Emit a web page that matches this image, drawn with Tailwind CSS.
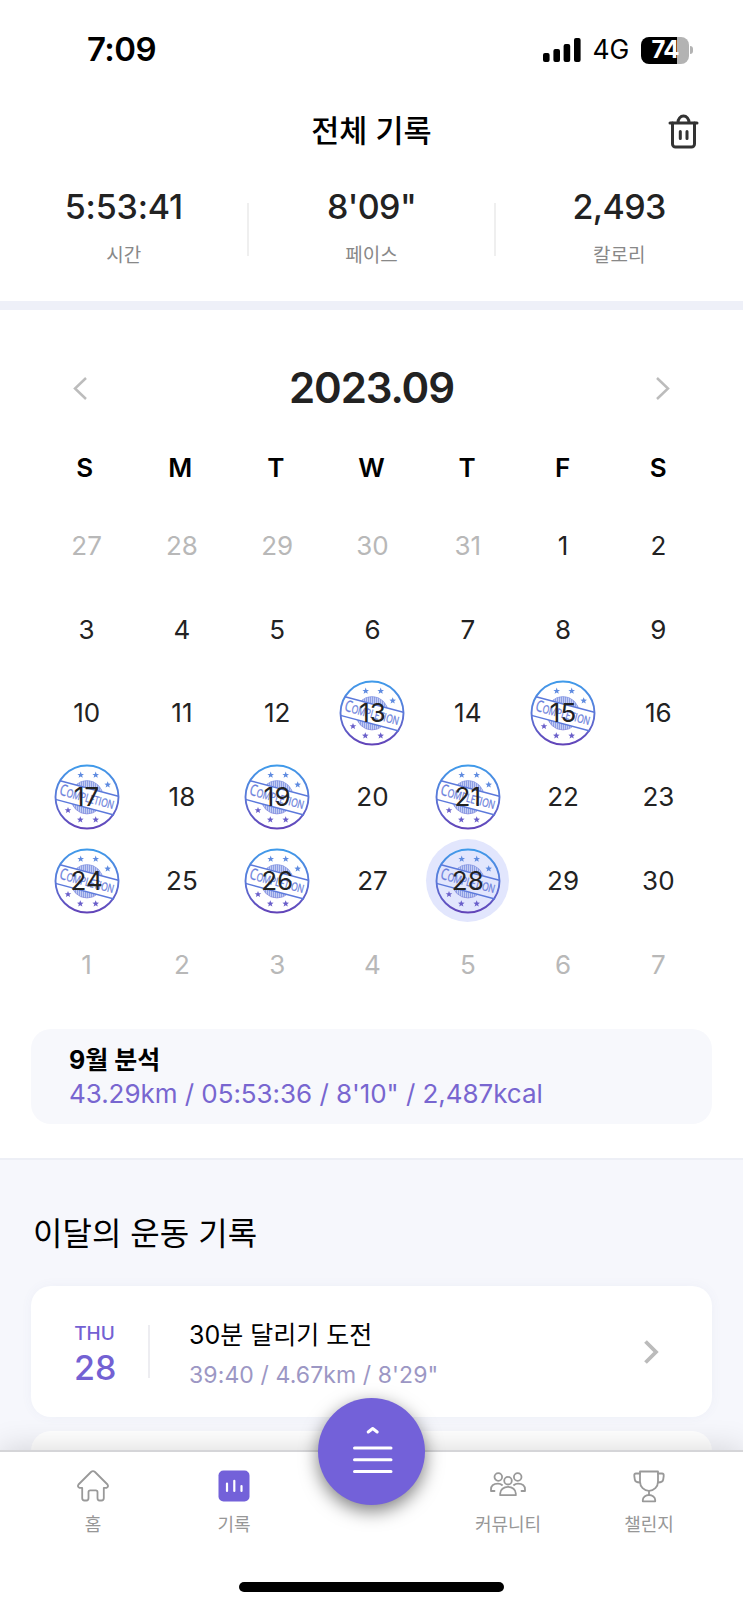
<!DOCTYPE html>
<html lang="ko">
<head>
  <meta charset="UTF-8">
  <meta name="viewport" content="width=device-width, initial-scale=1.0">
  <title>전체 기록</title>
  <script src="https://cdn.jsdelivr.net/npm/@tailwindcss/browser@4"></script>
</head>
<body class="bg-white text-[#222] font-['Inter','Noto_Sans_CJK_KR',sans-serif]">
  <!-- 완료 스탬프 -->
  <svg class="absolute w-0 h-0">
    <defs>
      <linearGradient id="ink" gradientUnits="userSpaceOnUse" x1="0" y1="-32" x2="0" y2="32">
        <stop offset="0" stop-color="#3f9bea"/>
        <stop offset="0.5" stop-color="#5b78d8"/>
        <stop offset="1" stop-color="#6243b8"/>
      </linearGradient>
      <pattern id="hatch" width="2" height="4" patternUnits="userSpaceOnUse">
        <rect width="2" height="4" fill="#c3cdf4"/>
        <rect width="1" height="4" fill="#8e9fe4"/>
      </pattern>
      <clipPath id="top"><path d="M-34-34H34V-.5L-34-18.7Z"/></clipPath>
      <clipPath id="bottom"><path d="M-34 34H34V19.9L-34 1.7Z"/></clipPath>
      <path id="star" d="M0-3.4 .9-1.1 3.3-1 1.4.5 2.1 2.8 0 1.5-2.1 2.8-1.4.5-3.3-1-.9-1.1Z"/>
      <symbol id="stamp" viewBox="-33 -33 66 66">
        <g clip-path="url(#top)"><circle r="16" cy="-.5" fill="url(#hatch)" stroke="#7d90e0" stroke-width=".6"/></g>
        <g clip-path="url(#bottom)"><circle r="16" cy="1" fill="url(#hatch)" stroke="#7d80d8" stroke-width=".6"/></g>
        <g fill="#5f8be0">
          <use href="#star" x="-6.3" y="-22"/>
          <use href="#star" x="8.7" y="-22"/>
          <use href="#star" x="20.7" y="-12.3"/>
        </g>
        <g fill="#6a5fca">
          <use href="#star" x="-19" y="13.3"/>
          <use href="#star" x="-6.7" y="22.7"/>
          <use href="#star" x="8.7" y="22.7"/>
        </g>
        <circle r="31.5" fill="none" stroke="url(#ink)" stroke-width="1.9"/>
        <g fill="none" stroke="#5c79db" stroke-width="1.4">
          <path d="M-27-16.3 31.3-.7"/>
          <path d="M-31.5 2.4 27 18"/>
        </g>
        <text transform="rotate(15)" x="-28" y="5" textLength="56" lengthAdjust="spacingAndGlyphs" fill="#6b7fdc" stroke="#6b7fdc" stroke-width=".3" font-family="Open Sans, sans-serif" font-size="15.5">C<tspan font-size="11.5">OMPLETION</tspan></text>
      </symbol>
    </defs>
  </svg>

  <div class="relative w-[743px] h-[1608px] overflow-hidden flex flex-col">
    <!-- 상태바 -->
    <div class="h-[98px] shrink-0 flex items-center justify-between pl-[87px] pr-[50px] pt-[2px]">
      <span class="text-[33px] font-semibold text-black tracking-[-0.6px]">7:09</span>
      <div class="flex items-center gap-[12px]">
        <svg class="w-[38px] h-[24px]" viewBox="0 0 38 24" fill="#000">
          <rect x="0" y="15" width="6.6" height="9" rx="2"/>
          <rect x="10.4" y="11" width="6.6" height="13" rx="2"/>
          <rect x="20.6" y="6" width="6.6" height="18" rx="2"/>
          <rect x="31" y="0" width="6.6" height="24" rx="2"/>
        </svg>
        <span class="text-[26.500px] text-black tracking-[-0.2px]">4G</span>
        <div class="flex items-center gap-[1px]">
          <div class="w-[48px] h-[27px] rounded-[8px] bg-linear-to-r from-black from-75% to-[#b3b3b3] to-75% flex items-center justify-center">
            <span class="text-[24px] font-bold text-white tracking-[-1px]">74</span>
          </div>
          <div class="w-[3px] h-[8px] rounded-r-full bg-[#b3b3b3]"></div>
        </div>
      </div>
    </div>

    <!-- 헤더 -->
    <div class="h-[66px] shrink-0 flex items-center justify-center relative">
      <h1 class="text-[30.500px] leading-none font-medium text-black">전체 기록</h1>
      <svg class="absolute right-[44px] top-[15px] w-[32px] h-[36px]" viewBox="0 0 32 36" fill="none" stroke="#333" stroke-width="3" stroke-linecap="round" stroke-linejoin="round">
        <path d="M3 10H30"/>
        <path d="M11 9.500a5.500 6.500 0 0 1 11 0"/>
        <path d="M5.500 10V31a3 3 0 0 0 3 3H24.500a3 3 0 0 0 3-3V10"/>
        <path d="M13.300 18.500v7M20 18.500v7"/>
      </svg>
    </div>

    <!-- 전체 요약 -->
    <div class="h-[137px] shrink-0 grid grid-cols-3 text-center pt-[23px]">
      <div>
        <div class="text-[34px] leading-[40px] font-medium tracking-[-0.2px]">5:53:41</div>
        <div class="text-[19px] leading-[28px] mt-[15px] text-[#888]">시간</div>
      </div>
      <div class="relative">
        <div class="text-[34px] leading-[40px] font-medium tracking-[-0.6px]">8'09"</div>
        <div class="text-[19px] leading-[28px] mt-[15px] text-[#888]">페이스</div>
        <div class="absolute -left-px -right-px top-[16px] h-[53px] border-x-2 border-[#efefef]"></div>
      </div>
      <div>
        <div class="text-[34px] leading-[40px] font-medium tracking-[-0.6px]">2,493</div>
        <div class="text-[19px] leading-[28px] mt-[15px] text-[#888]">칼로리</div>
      </div>
    </div>
    <div class="h-[9px] shrink-0 bg-[#eef0f8]"></div>

    <!-- 달력 -->
    <div class="h-[848px] shrink-0 px-[37px]">
      <div class="flex items-center justify-between pt-[53px] px-[36px]">
        <svg class="w-[14px] h-[23px]" viewBox="0 0 14 23" fill="none" stroke="#bcbcbc" stroke-width="2.500"><path d="M13 1 2 11.500 13 22"/></svg>
        <h2 class="text-[42px] leading-[50px] font-semibold tracking-[-1.1px]">2023.09</h2>
        <svg class="w-[14px] h-[23px]" viewBox="0 0 14 23" fill="none" stroke="#bcbcbc" stroke-width="2.500"><path d="M1 1 12 11.500 1 22"/></svg>
      </div>
      <div class="grid grid-cols-7 text-center text-[26px] leading-[32px] font-semibold text-black mt-[39px]">
        <div>S</div><div>M</div><div>T</div><div>W</div><div>T</div><div>F</div><div>S</div>
      </div>
      <div id="dias" class="grid grid-cols-7 mt-[19.500px] pl-[2px]"></div>
      <div class="-mx-[6px] mt-[23px] h-[95px] rounded-[20px] bg-[#f7f8fc] pl-[38px] pt-[15px]">
        <div class="text-[25px] leading-[33px] font-bold text-black">9월 분석</div>
        <div class="text-[26px] leading-[33px] tracking-[-0.05px] text-[#7866d0]">43.29km / 05:53:36 / 8'10" / 2,487kcal</div>
      </div>
    </div>

    <!-- 이달의 기록 -->
    <div class="grow border-t-2 border-[#edeff6] bg-[#f6f7fc] px-[31px]">
      <h2 class="text-[32px] leading-[40px] text-black pt-[54px] pl-[2px]">이달의 운동 기록</h2>
      <div class="mt-[32px] h-[131px] rounded-[20px] bg-white shadow-[0_0_12px_rgba(80,90,160,0.05)] flex items-center pl-[43px] pr-[53px]">
        <div class="w-[41px] text-center text-[#7361d3] font-medium pt-[6px]">
          <div class="text-[19px] leading-[24px]">THU</div>
          <div class="text-[34px] leading-[40px] mt-[2px]">28</div>
        </div>
        <div class="w-[2px] h-[53px] bg-[#ededf1] ml-[33px]"></div>
        <div class="ml-[39px] grow pt-[4px]">
          <div class="text-[25px] leading-[36px] text-black">30분 달리기 도전</div>
          <div class="text-[23px] leading-[30px] mt-[7px] text-[#9c97c4] tracking-[0.1px]">39:40 / 4.67km / 8'29"</div>
        </div>
        <svg class="w-[15px] h-[24px]" viewBox="0 0 15 24" fill="none" stroke="#bbb" stroke-width="3.800"><path d="M1.500 1.500 12 12 1.500 22.500"/></svg>
      </div>
      <div class="mt-[14px] h-[131px] rounded-[20px] bg-white"></div>
    </div>

    <!-- 하단 메뉴 -->
    <nav class="absolute inset-x-0 bottom-0 h-[158px] bg-white border-t-2 border-[#d5d5d8] shadow-[0_0_30px_rgba(0,0,0,0.16)] text-[18px] leading-[26px] text-[#979797]">
      <div class="flex justify-between pt-[17px] pl-[43px] pr-[44px] text-center">
        <div class="w-[100px] flex flex-col items-center">
          <svg class="w-[34px] h-[34px]" viewBox="0 0 34 34" fill="none" stroke="#999" stroke-width="1.800" stroke-linejoin="round"><path d="M15 3Q17 1.300 19 3L31.500 15.500Q33 18 30.500 18.800H27.800V29Q27.800 31.500 25.500 31.500H23.500Q21.500 31.500 21.500 29V23Q21.500 21.300 19.800 21.300H14.200Q12.500 21.300 12.500 23V29Q12.500 31.500 10.500 31.500H8.500Q6.200 31.500 6.200 29V18.800H3.500Q1 18 2.500 15.500Z"/></svg>
          <span class="mt-[9px]">홈</span>
        </div>
        <div class="w-[100px] flex flex-col items-center mr-[133px]">
          <svg class="w-[34px] h-[34px]" viewBox="0 0 34 34"><rect x="1.500" y="1.500" width="31" height="31" rx="5" fill="#7361d9"/><path d="M10 14.500v7.500M17.300 11.800v10.200M24.500 17v5" stroke="#fff" stroke-width="2.200" stroke-linecap="round"/></svg>
          <span class="mt-[9px]">기록</span>
        </div>
        <div class="w-[100px] flex flex-col items-center">
          <svg class="w-[38px] h-[34px]" viewBox="0 0 38 34" fill="none" stroke="#999" stroke-width="1.800" stroke-linecap="round" stroke-linejoin="round">
            <circle cx="9.300" cy="8" r="3.800"/><circle cx="28.700" cy="8" r="3.800"/><circle cx="19" cy="11.700" r="3.800"/>
            <path d="M11.200 26.200V24.500a7.800 6.700 0 0 1 15.600 0V26.200Z"/>
            <path d="M5.500 22H2V20.500C2 16.500 5 14.600 9 14.600Q11.500 14.600 13 16M32.500 22H36V20.500C36 16.500 33 14.600 29 14.600Q26.500 14.600 25 16"/>
          </svg>
          <span class="mt-[9px]">커뮤니티</span>
        </div>
        <div class="w-[100px] flex flex-col items-center">
          <svg class="w-[34px] h-[34px]" viewBox="0 0 34 34" fill="none" stroke="#999" stroke-width="1.800" stroke-linecap="round" stroke-linejoin="round">
            <path d="M8 2.500H26V12.500C26 18 22 21.800 17 21.800S8 18 8 12.500Z"/>
            <path d="M8 4.500H4Q2 4.500 2.300 7L2.800 10.500Q3.300 13.500 8 13.500M26 4.500H30Q32 4.500 31.700 7L31.200 10.500Q30.700 13.500 26 13.500M17 22V26"/>
            <path d="M10.800 32.300V31a6.200 5 0 0 1 12.400 0V32.300Z"/>
          </svg>
          <span class="mt-[9px]">챌린지</span>
        </div>
      </div>
      <div class="absolute left-[318px] top-[-54px] w-[107px] h-[107px] rounded-full bg-[#7361d9] shadow-[0_6px_18px_rgba(0,0,0,0.5)]">
        <svg class="w-full h-full" viewBox="0 0 107 107" fill="none" stroke="#fff" stroke-width="3" stroke-linecap="round" stroke-linejoin="round">
          <path d="M50.200 34 54.700 30.500 59.200 34"/>
          <path d="M36.500 50H73M36.500 61.800H73M36.500 73.500H73"/>
        </svg>
      </div>
      <div class="absolute left-[239px] bottom-[16px] w-[265px] h-[10px] rounded-full bg-black"></div>
    </nav>
  </div>

  <script>
    const completos = [13, 15, 17, 19, 21, 24, 26, 28];
    const hoje = 28;
    const grade = document.getElementById('dias');

    for (let i = 0; i < 42; i++) {
      const fora = i < 5 || i > 34;
      const dia = i < 5 ? 27 + i : i > 34 ? i - 34 : i - 4;
      const cor = fora ? 'text-[#b8b8b8]' : 'text-[#222]';
      const fundo = !fora && dia === hoje ? '<div class="absolute w-[83px] h-[83px] rounded-full bg-[#e2e6fd]"></div>' : '';
      const selo = !fora && completos.includes(dia) ? '<svg class="absolute w-[66px] h-[66px]"><use href="#stamp"/></svg>' : '';
      grade.innerHTML += `<div class="relative h-[83.800px] flex items-center justify-center text-[26px] ${cor}">${fundo}${selo}<span class="relative">${dia}</span></div>`;
    }
  </script>
</body>
</html>
